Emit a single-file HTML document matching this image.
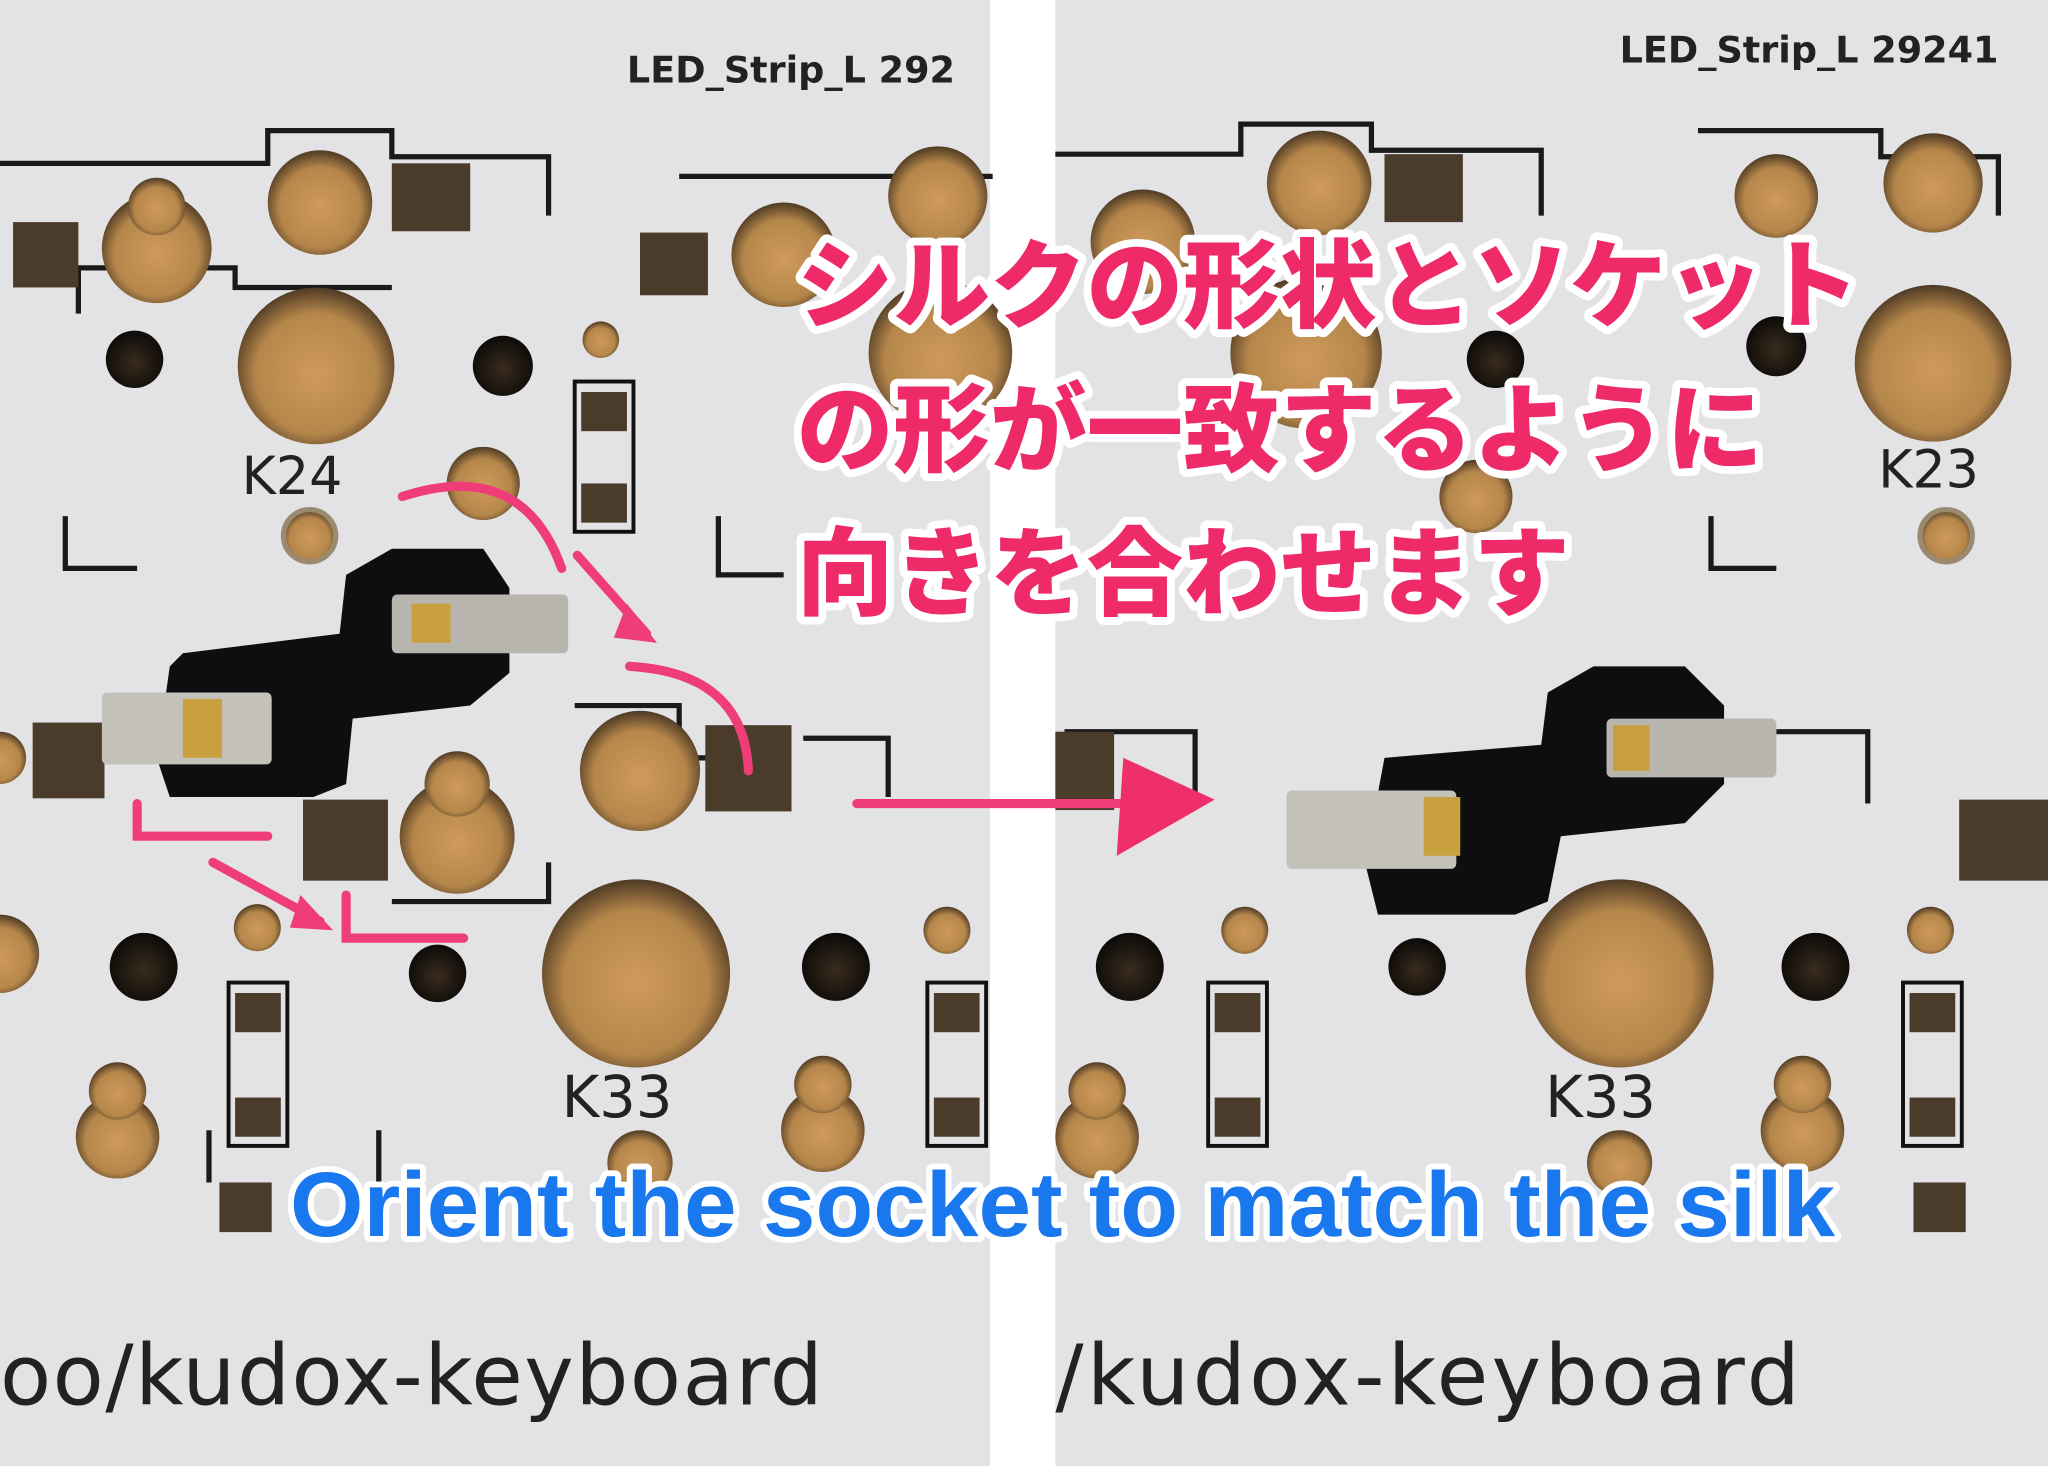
<!DOCTYPE html>
<html><head><meta charset="utf-8"><style>
html,body{margin:0;padding:0;width:2048px;height:1466px;overflow:hidden;background:#fff}
svg{display:block}
.jp{font-family:"Liberation Sans","Noto Sans CJK JP",sans-serif;font-weight:900;font-size:74px;fill:#ee2a68;stroke:#fff;stroke-width:12px;paint-order:stroke;stroke-linejoin:round}
.en{font-family:"Liberation Sans",sans-serif;font-weight:700;font-size:70px;fill:#1a78ee;stroke:#fff;stroke-width:9px;paint-order:stroke;stroke-linejoin:round}
.silk{font-family:"DejaVu Sans","Liberation Sans",sans-serif;fill:#222}
</style></head><body>
<svg width="2048" height="1466" viewBox="0 0 1568 1122" preserveAspectRatio="none">
<defs>
<radialGradient id="cu" cx="50%" cy="55%" r="55%"><stop offset="0" stop-color="#cf9a5c"/><stop offset="0.7" stop-color="#b5864a"/><stop offset="1" stop-color="#4e3a24"/></radialGradient>
<radialGradient id="hole" cx="50%" cy="55%" r="55%"><stop offset="0" stop-color="#3a2c1e"/><stop offset="1" stop-color="#0c0a08"/></radialGradient>
</defs>
<rect x="0" y="0" width="1568" height="1122" fill="#fff"/>
<rect x="0" y="0" width="758" height="1122" fill="#e3e3e6"/>
<rect x="808" y="0" width="760" height="1122" fill="#e3e3e6"/>
<g id="L">
<g fill="none" stroke="#1a1a1a" stroke-width="4">
<path d="M0 125 H205 V100 H300 V120 H420 V165"/>
<path d="M60 240 V205 H180 V220 H300"/>
<path d="M520 135 H760"/>
<path d="M50 395 V435 H105"/><path d="M550 395 V440 H600"/>
<path d="M440 540 H520 V580 H600 M615 565 H680 V610"/>
<path d="M300 690 H420 V660"/>
<path d="M160 865 V905 M290 865 V905"/>
</g>
<circle cx="242" cy="280" r="60" fill="url(#cu)"/>
<circle cx="487" cy="745" r="72" fill="url(#cu)"/>
<circle cx="490" cy="590" r="46" fill="url(#cu)"/>
<circle cx="350" cy="640" r="44" fill="url(#cu)"/><circle cx="350" cy="600" r="25" fill="url(#cu)"/>
<circle cx="245" cy="155" r="40" fill="url(#cu)"/>
<circle cx="120" cy="190" r="42" fill="url(#cu)"/><circle cx="120" cy="158" r="22" fill="url(#cu)"/>
<circle cx="718" cy="150" r="38" fill="url(#cu)"/>
<circle cx="600" cy="195" r="40" fill="url(#cu)"/>
<circle cx="720" cy="270" r="55" fill="url(#cu)"/>
<circle cx="0" cy="730" r="30" fill="url(#cu)"/>
<circle cx="0" cy="580" r="20" fill="url(#cu)"/>
<circle cx="90" cy="870" r="32" fill="url(#cu)"/><circle cx="90" cy="835" r="22" fill="url(#cu)"/>
<circle cx="630" cy="865" r="32" fill="url(#cu)"/><circle cx="630" cy="830" r="22" fill="url(#cu)"/>
<circle cx="490" cy="890" r="25" fill="url(#cu)"/>
<circle cx="370" cy="370" r="28" fill="url(#cu)"/>
<circle cx="103" cy="275" r="22" fill="url(#hole)"/>
<circle cx="385" cy="280" r="23" fill="url(#hole)"/>
<circle cx="110" cy="740" r="26" fill="url(#hole)"/>
<circle cx="335" cy="745" r="22" fill="url(#hole)"/>
<circle cx="640" cy="740" r="26" fill="url(#hole)"/>
<circle cx="237" cy="410" r="20" fill="url(#cu)" stroke="#9a8a70" stroke-width="4"/>
<circle cx="460" cy="260" r="14" fill="url(#cu)"/>
<circle cx="197" cy="710" r="18" fill="url(#cu)"/>
<circle cx="725" cy="712" r="18" fill="url(#cu)"/>
<g fill="#4a3b2a">
<rect x="300" y="125" width="60" height="52"/>
<rect x="490" y="178" width="52" height="48"/>
<rect x="10" y="170" width="50" height="50"/>
<rect x="25" y="553" width="55" height="58"/>
<rect x="540" y="555" width="66" height="66"/>
<rect x="232" y="612" width="65" height="62"/>
<rect x="445" y="300" width="35" height="30"/><rect x="445" y="370" width="35" height="30"/>
<rect x="180" y="760" width="35" height="30"/><rect x="180" y="840" width="35" height="30"/>
<rect x="715" y="760" width="35" height="30"/><rect x="715" y="840" width="35" height="30"/>
<rect x="168" y="905" width="40" height="38"/>
</g>
<g fill="none" stroke="#111" stroke-width="3"><rect x="440" y="292" width="45" height="115"/><rect x="175" y="752" width="45" height="125"/><rect x="710" y="752" width="45" height="125"/></g>
<text class="silk" x="185" y="378" font-size="40">K24</text>
<text class="silk" x="430" y="855" font-size="44">K33</text>
<text class="silk" x="480" y="63" font-size="28" font-weight="bold">LED_Strip_L 292</text>
<text class="silk" x="0" y="1075" font-size="64" fill="#333" textLength="630">oo/kudox-keyboard</text>
<path d="M140 500 L260 485 L265 440 L300 420 L370 420 L390 450 L390 515 L360 540 L270 550 L265 600 L240 610 L130 610 L120 580 L130 510 Z" fill="#0e0e10"/>
<rect x="300" y="455" width="135" height="45" rx="4" fill="#b8b4ae"/>
<rect x="315" y="462" width="30" height="30" fill="#c8a040"/>
<rect x="78" y="530" width="130" height="55" rx="4" fill="#c4c0ba"/>
<rect x="140" y="535" width="30" height="45" fill="#c8a040"/>
</g>
<g>
<g fill="none" stroke="#1a1a1a" stroke-width="4">
<path d="M808 118 H950 V95 H1050 V115 H1180 V165"/>
<path d="M1300 100 H1440 V120 H1530 V165"/>
<path d="M1310 395 V435 H1360"/>
<path d="M1360 560 H1430 V615"/>
<path d="M815 560 H915 V610"/>
</g>
<circle cx="1480" cy="278" r="60" fill="url(#cu)"/>
<circle cx="1240" cy="745" r="72" fill="url(#cu)"/>
<circle cx="1010" cy="140" r="40" fill="url(#cu)"/>
<circle cx="1480" cy="140" r="38" fill="url(#cu)"/>
<circle cx="875" cy="185" r="40" fill="url(#cu)"/>
<circle cx="1360" cy="150" r="32" fill="url(#cu)"/>
<circle cx="1000" cy="270" r="58" fill="url(#cu)"/>
<circle cx="1130" cy="380" r="28" fill="url(#cu)"/>
<circle cx="840" cy="870" r="32" fill="url(#cu)"/><circle cx="840" cy="835" r="22" fill="url(#cu)"/>
<circle cx="1380" cy="865" r="32" fill="url(#cu)"/><circle cx="1380" cy="830" r="22" fill="url(#cu)"/>
<circle cx="1240" cy="890" r="25" fill="url(#cu)"/>
<circle cx="1145" cy="275" r="22" fill="url(#hole)"/>
<circle cx="1360" cy="265" r="23" fill="url(#hole)"/>
<circle cx="865" cy="740" r="26" fill="url(#hole)"/>
<circle cx="1085" cy="740" r="22" fill="url(#hole)"/>
<circle cx="1390" cy="740" r="26" fill="url(#hole)"/>
<circle cx="1490" cy="410" r="20" fill="url(#cu)" stroke="#9a8a70" stroke-width="4"/>
<circle cx="953" cy="712" r="18" fill="url(#cu)"/>
<circle cx="1478" cy="712" r="18" fill="url(#cu)"/>
<g fill="#4a3b2a">
<rect x="1060" y="118" width="60" height="52"/>
<rect x="808" y="560" width="45" height="60"/>
<rect x="1500" y="612" width="68" height="62"/>
<rect x="930" y="760" width="35" height="30"/><rect x="930" y="840" width="35" height="30"/>
<rect x="1462" y="760" width="35" height="30"/><rect x="1462" y="840" width="35" height="30"/>
<rect x="1465" y="905" width="40" height="38"/>
</g>
<g fill="none" stroke="#111" stroke-width="3"><rect x="925" y="752" width="45" height="125"/><rect x="1457" y="752" width="45" height="125"/></g>
<text class="silk" x="1438" y="373" font-size="40">K23</text>
<text class="silk" x="1183" y="855" font-size="44">K33</text>
<text class="silk" x="1240" y="48" font-size="28" font-weight="bold">LED_Strip_L 29241</text>
<text class="silk" x="808" y="1075" font-size="64" fill="#333" textLength="570">/kudox-keyboard</text>
<path d="M1060 580 L1180 570 L1185 530 L1220 510 L1290 510 L1320 540 L1320 600 L1290 630 L1195 640 L1185 690 L1160 700 L1055 700 L1045 660 Z" fill="#0e0e10"/>
<rect x="1230" y="550" width="130" height="45" rx="4" fill="#b8b4ae"/>
<rect x="1235" y="555" width="28" height="35" fill="#c8a040"/>
<rect x="985" y="605" width="130" height="60" rx="4" fill="#c4c0ba"/>
<rect x="1090" y="610" width="28" height="45" fill="#c8a040"/>
</g>
<g fill="none" stroke="#ef3d78" stroke-width="7" stroke-linecap="round">
<path d="M308 380 Q400 350 430 435"/>
<path d="M482 510 Q570 515 573 590"/>
<path d="M105 615 V640 H205"/>
<path d="M265 685 V718 H355"/>
<path d="M442 425 L495 485"/>
<path d="M163 660 L245 705"/>
<path d="M656 615 L870 615"/>
</g>
<path d="M860 580 L930 612 L855 655 Z" fill="#ef2f6a"/>
<path d="M480 462 L503 492 L470 488 Z" fill="#ef3d78"/>
<path d="M230 685 L255 712 L222 710 Z" fill="#ef3d78"/>
<text class="jp" x="610" y="245">シルクの形状とソケット</text>
<text class="jp" x="610" y="355">の形が一致するように</text>
<text class="jp" x="610" y="465">向きを合わせます</text>
<text class="en" x="222" y="946" textLength="1183" lengthAdjust="spacingAndGlyphs">Orient the socket to match the silk</text>
</svg>
</body></html>
